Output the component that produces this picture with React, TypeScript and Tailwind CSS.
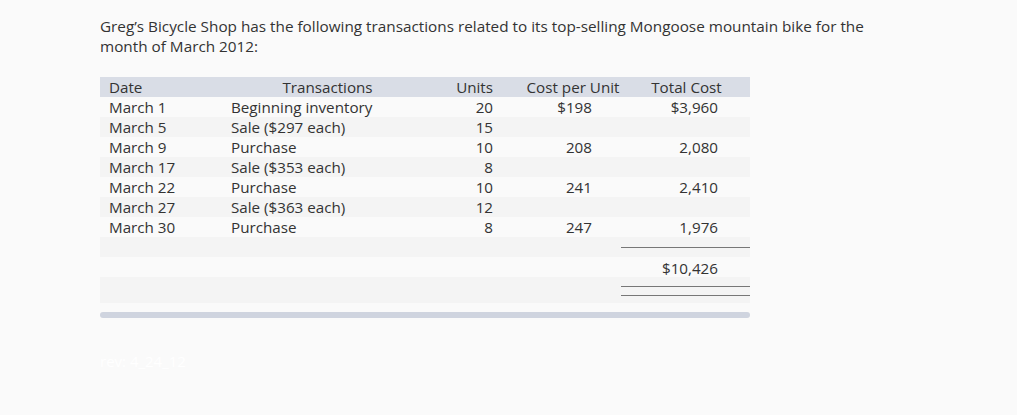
const rows = [
  { date: "March 1", tx: "Beginning inventory", units: "20", cost: "$198", total: "$3,960" },
  { date: "March 5", tx: "Sale ($297 each)", units: "15", cost: "", total: "" },
  { date: "March 9", tx: "Purchase", units: "10", cost: "208", total: "2,080" },
  { date: "March 17", tx: "Sale ($353 each)", units: "8", cost: "", total: "" },
  { date: "March 22", tx: "Purchase", units: "10", cost: "241", total: "2,410" },
  { date: "March 27", tx: "Sale ($363 each)", units: "12", cost: "", total: "" },
  { date: "March 30", tx: "Purchase", units: "8", cost: "247", total: "1,976" },
];

const grid = "grid grid-cols-[125px_205px_70px_130px_120px] h-[20px]";

export default function App() {
  return (
    <div className="min-h-[415px] w-[1017px] bg-[#fafafa] pt-[16px] font-['Open_Sans',sans-serif] text-[#333]">
      <p className="whitespace-nowrap pl-[100px] text-[15.3px] leading-[20px]">
        Greg’s Bicycle Shop has the following transactions related to its top-selling Mongoose mountain bike for the
        <br />
        month of March 2012:
      </p>

      <div className="ml-[100px] mt-[21px] w-[650px] whitespace-nowrap text-[15.2px] leading-[20px]">
        <div className={`${grid} bg-[#d9dde6]`}>
          <div className="pl-[9px]">Date</div>
          <div className="text-center">Transactions</div>
          <div className="pr-[7px] text-right">Units</div>
          <div className="pl-[16px] text-center">Cost per Unit</div>
          <div className="pr-[7px] text-center">Total Cost</div>
        </div>

        {rows.map((r, i) => (
          <div key={r.date} className={`${grid} ${i % 2 ? "bg-[#f4f4f4]" : "bg-[#fafafa]"}`}>
            <div className="pl-[9px]">{r.date}</div>
            <div className="pl-[6px]">{r.tx}</div>
            <div className="pr-[7px] text-right">{r.units}</div>
            <div className="pr-[38px] text-right">{r.cost}</div>
            <div className="pr-[32px] text-right">{r.total}</div>
          </div>
        ))}

        {/* subtotal rule, grand total, double rule */}
        <div className={`${grid} bg-[#f4f4f4]`}>
          <div className="col-start-5 relative">
            <div className="absolute left-[-9px] right-0 top-[10px] border-t border-[#777]" />
          </div>
        </div>
        <div className={`${grid} bg-[#fafafa]`}>
          <div className="col-start-5 pr-[32px] pt-[1px] text-right">$10,426</div>
        </div>
        <div className="grid h-[26px] grid-cols-[125px_205px_70px_130px_120px] bg-[#f4f4f4]">
          <div className="col-start-5 relative">
            <div className="absolute left-[-9px] right-0 top-[9px] border-t border-[#777]" />
            <div className="absolute left-[-9px] right-0 top-[18px] border-t border-[#777]" />
          </div>
        </div>

        <div className="mt-[9px] h-[6px] rounded-full bg-[#cfd4df]" />
      </div>

      <div className="ml-[100px] mt-[32px] text-[15px] text-white">rev: 4_24_12</div>
    </div>
  );
}
